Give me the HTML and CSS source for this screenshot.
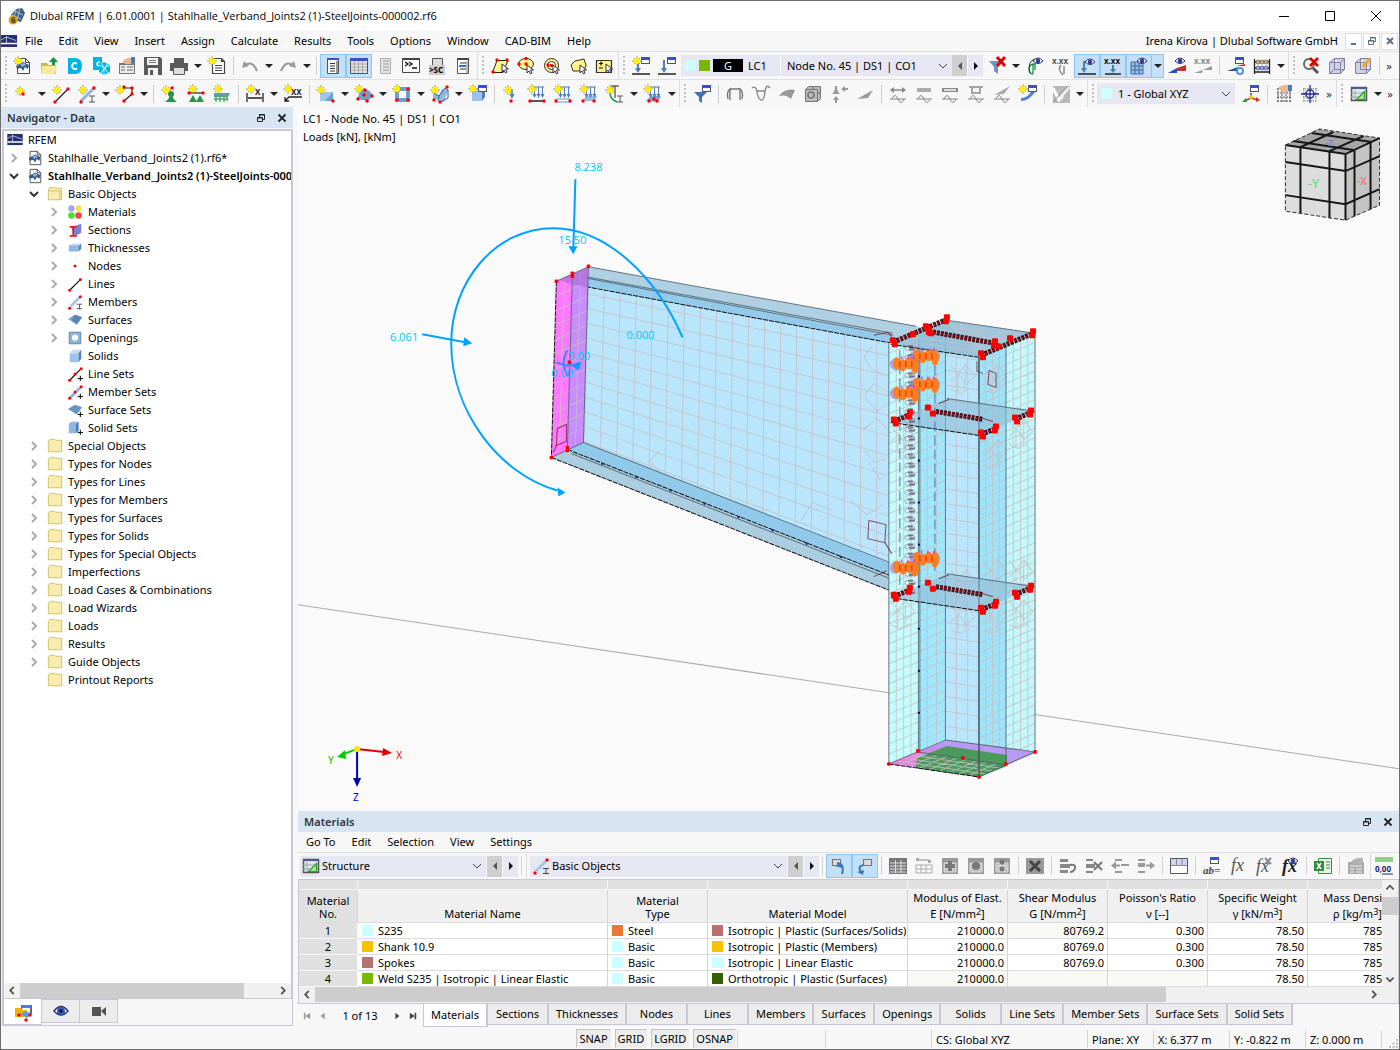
FILE: index.html
```html
<!DOCTYPE html>
<html lang="en">
<head>
<meta charset="utf-8">
<title>Dlubal RFEM</title>
<link rel="stylesheet" href="styles.css">
</head>
<body>
<div class="app">
  <header class="title">
    <svg class="icon" data-icon="app"></svg>
    <h1>Dlubal RFEM | 6.01.0001 | Stahlhalle_Verband_Joints2 (1)-SteelJoints-000002.rf6</h1>
    <div class="wincontrols">
      <button aria-label="Minimize"><svg viewBox="0 0 12 12"><path d="M1 6.500h10"/></svg></button>
      <button aria-label="Maximize"><svg viewBox="0 0 12 12"><path d="M1.500 1.500h9v9h-9z"/></svg></button>
      <button aria-label="Close"><svg viewBox="0 0 12 12"><path d="M1 1l10 10M11 1L1 11"/></svg></button>
    </div>
  </header>

  <nav class="menu" aria-label="Main menu">
    <svg class="logo" viewBox="0 0 16 12"><use href="#logo"/></svg>
    <button>File</button><button>Edit</button><button>View</button><button>Insert</button><button>Assign</button><button>Calculate</button><button>Results</button><button>Tools</button><button>Options</button><button>Window</button><button>CAD-BIM</button><button>Help</button>
    <span class="user">Irena Kirova | Dlubal Software GmbH</span>
    <button class="mdi" aria-label="Minimize document"><svg viewBox="0 0 10 10"><path d="M2 8h5"/></svg></button>
    <button class="mdi" aria-label="Restore document"><svg viewBox="0 0 10 10"><path class="thin" d="M1.500 4.500h5v4h-5zM3.500 4V1.500h5v4H7M1 5h6M3 2h6"/></svg></button>
    <button class="mdi" aria-label="Close document"><svg viewBox="0 0 10 10"><path d="M2 2l6 6M8 2L2 8"/></svg></button>
  </nav>

  <div class="bar">
    <div class="tools" data-tools="handle new open center connect props save print v report s undo v redo v s *navigator *tables panel console script list end"></div>
    <div class="tools" data-tools="handle selquad selell selcirc selpoly selnum end"></div>
    <div class="tools" data-tools="handle lcnew lcedit"></div>
    <div class="combo loadcase">
      <span class="swatch cyan"></span><span class="swatch green"></span><span class="tag">G</span><span class="lc">LC1</span>
      <select aria-label="Load case"><option>Node No. 45 | DS1 | CO1</option></select>
      <svg class="chev" viewBox="0 0 10 10"><path d="M1 3l4 4 4-4"/></svg>
    </div>
    <button class="step off" aria-label="Previous load case"><svg viewBox="0 0 6 8"><path d="M5 0v8L1 4z"/></svg></button><button class="step" aria-label="Next load case"><svg viewBox="0 0 6 8"><path d="M1 0v8l4-4z"/></svg></button>
    <div class="tools" data-tools="filterx v supeye supval *loadeye *loadval *mesheye *v reseye resval s resset abacus v end"></div>
    <div class="tools" data-tools="handle nozoom box boxedit s more"></div>
  </div>

  <div class="bar">
    <div class="tools" data-tools="handle node v line member v polyline v s nodesup linesup surfsup s dim v dimxx s surface v shell v opening v solid v block s nodeload memload lineload surfload imperf v loadgen v end"></div>
    <div class="tools" data-tools="handle filter s frame moment surfres dice supres wedge s res1 res2 res3 res4 res5 resnew s colors v end"></div>
    <div class="tools" data-tools="handle"></div>
    <div class="combo coords">
      <span class="swatch cyan"></span>
      <select aria-label="Coordinate system"><option>1 - Global XYZ</option></select>
      <svg class="chev" viewBox="0 0 10 10"><path d="M1 3l4 4 4-4"/></svg>
    </div>
    <div class="tools" data-tools="cs s grid snap more end"></div>
    <div class="tools" data-tools="handle table v more"></div>
  </div>

  <main class="work">
    <aside class="navigator">
      <div class="caption"><h2>Navigator - Data</h2>
        <button aria-label="Float navigator"><svg viewBox="0 0 10 10"><use href="#float"/></svg></button>
        <button aria-label="Close navigator"><svg viewBox="0 0 10 10"><use href="#close"/></svg></button></div>
      <div class="treebox">
        <ul class="tree" id="tree"></ul>
        <div class="hscroll"><button aria-label="Scroll left"><svg viewBox="0 0 10 10"><path d="M7 1L3 5l4 4"/></svg></button><div class="track"><i class="navthumb"></i></div><button aria-label="Scroll right"><svg viewBox="0 0 10 10"><path d="M3 1l4 4-4 4"/></svg></button></div>
      </div>
      <div class="navtabs">
        <button class="on" aria-label="Data"><svg class="icon" data-icon="navdata"></svg></button>
        <button aria-label="Display"><svg class="icon" data-icon="eye"></svg></button>
        <button aria-label="Views"><svg class="icon" data-icon="camera"></svg></button>
      </div>
    </aside>

    <section class="content">
      <div class="viewport">
        <svg class="scene" viewBox="298 107 1101 700" preserveAspectRatio="xMinYMin slice" role="img" aria-label="Steel joint model">
          <g class="caption-text"><text x="303" y="123">LC1 - Node No. 45 | DS1 | CO1</text><text x="303" y="141">Loads [kN], [kNm]</text></g>
          <path class="horizon" d="M298 604L1399 768"/>
          <g id="model"></g>
          <g class="loads">
            <path d="M682 337C655 275 605 228 553 228C495 228 451 281 451 343C451 412 500 474 557 490"/>
            <path d="M575 179L573 247M422 334L465 342"/>
            <path class="thin" d="M556 362q14 6 24 0M567 350q-8 14 1 26"/>
            <path class="head" d="M568 246h9l-4 8zM464 337l8 6-9 3zM557 487l8 5-7 4zM572 366l9-4-3 8z"/>
            <text x="574" y="171">8.238</text><text x="558" y="244">15.50</text><text x="390" y="341">6.061</text><text x="626" y="339">0.000</text><text x="568" y="360">0.00</text><text x="551" y="377">0.00</text>
          </g>
          <g class="axes">
            <path stroke="#e00000" d="M357 748L384 751"/><path fill="#e00000" d="M383 747l9 5-10 3z"/>
            <path stroke="#00d000" d="M357 748L344 753"/><path fill="#00d000" d="M345 749l-8 7 9 2z"/>
            <path stroke="#0000b0" d="M357 748V778"/><path fill="#0000b0" d="M353 777h8l-4 9z"/>
            <circle cx="357" cy="748" r="3" fill="#ffe600" stroke="none"/>
            <text x="396" y="758" fill="#f00000">X</text><text x="328" y="763" fill="#00c000">Y</text><text x="353" y="800" fill="#0000d0">Z</text>
          </g>
          <g class="cube">
            <path fill="#ddd" d="M1284 145l60 9v66l-60-9z"/><path fill="#c4c4c4" d="M1344 154l34-16v67l-34 15z"/><path fill="#a6a6a6" d="M1284 145l34-16 60 9-34 16z"/>
            <path class="edge" d="M1299 147v66M1328 151v67M1284 162l60 9 34-15M1284 195l60 9 34-15M1353 150v66M1369 142v67M1344 154v66M1284 145l60 9 34-16M1299 147l33-15M1328 151l34-15M1292 141l60 9M1310 133l60 9"/>
            <path class="rim" d="M1284 145l34-16 60 9v67l-34 15-60-9z"/>
            <text x="1306" y="188" fill="#6fe08a">-Y</text><text class="small" x="1355" y="185" fill="#f08080">-X</text><text class="tiny" x="1324" y="146" fill="#7f7fc8">-Z</text>
          </g>
        </svg>
      </div>

      <section class="materials">
        <div class="caption"><h2>Materials</h2>
          <button aria-label="Float table"><svg viewBox="0 0 10 10"><use href="#float"/></svg></button>
          <button aria-label="Close table"><svg viewBox="0 0 10 10"><use href="#close"/></svg></button></div>
        <nav class="menu sub" aria-label="Table menu"><button>Go To</button><button>Edit</button><button>Selection</button><button>View</button><button>Settings</button></nav>
        <div class="bar tablebar">
          <div class="combo structure"><svg class="icon" data-icon="table"></svg><select aria-label="Table group"><option>Structure</option></select><svg class="chev" viewBox="0 0 10 10"><path d="M1 3l4 4 4-4"/></svg></div>
          <button class="step off" aria-label="Previous group"><svg viewBox="0 0 6 8"><path d="M5 0v8L1 4z"/></svg></button><button class="step" aria-label="Next group"><svg viewBox="0 0 6 8"><path d="M1 0v8l4-4z"/></svg></button>
          <div class="tools" data-tools="s end"></div>
          <div class="combo objects"><svg class="icon" data-icon="tmember"></svg><select aria-label="Object group"><option>Basic Objects</option></select><svg class="chev" viewBox="0 0 10 10"><path d="M1 3l4 4 4-4"/></svg></div>
          <button class="step off" aria-label="Previous objects"><svg viewBox="0 0 6 8"><path d="M5 0v8L1 4z"/></svg></button><button class="step" aria-label="Next objects"><svg viewBox="0 0 6 8"><path d="M1 0v8l4-4z"/></svg></button>
          <div class="tools" data-tools="s *syncin *syncout s rows rowup rowadd rowcopy rowsplit s delete s ins cut left right s view s name fx fxx fxeye s excel s cards end"></div>
          <div class="tools" data-tools="decimals"></div>
        </div>
        <div class="gridbox">
          <div class="gridscroll">
            <table>
              <colgroup><col class="c-no"><col class="c-name"><col class="c-type"><col class="c-model"><col class="c-num"><col class="c-num"><col class="c-num"><col class="c-num"><col class="c-num"></colgroup>
              <thead>
                <tr class="strip"><td></td><td></td><td></td><td></td><td></td><td></td><td></td><td></td><td></td></tr>
                <tr><th>Material<br>No.</th><th>Material Name</th><th>Material<br>Type</th><th>Material Model</th><th class="unit">Modulus of Elast.<br>E [N/mm<sup>2</sup>]</th><th class="unit">Shear Modulus<br>G [N/mm<sup>2</sup>]</th><th class="unit">Poisson's Ratio<br>ν [--]</th><th class="unit">Specific Weight<br>γ [kN/m<sup>3</sup>]</th><th class="unit">Mass Density<br>ρ [kg/m<sup>3</sup>]</th></tr>
              </thead>
              <tbody>
                <tr><th>1</th><td><span class="swatch cyan"></span>S235</td><td><span class="swatch orange"></span>Steel</td><td><span class="swatch rose"></span>Isotropic | Plastic (Surfaces/Solids)</td><td class="n">210000.0</td><td class="n ro">80769.2</td><td class="n">0.300</td><td class="n">78.50</td><td class="n">7850.00</td></tr>
                <tr><th>2</th><td><span class="swatch amber"></span>Shank 10.9</td><td><span class="swatch cyan"></span>Basic</td><td><span class="swatch amber"></span>Isotropic | Plastic (Members)</td><td class="n">210000.0</td><td class="n">80769.0</td><td class="n">0.300</td><td class="n">78.50</td><td class="n">7850.00</td></tr>
                <tr><th>3</th><td><span class="swatch rose"></span>Spokes</td><td><span class="swatch cyan"></span>Basic</td><td><span class="swatch cyan"></span>Isotropic | Linear Elastic</td><td class="n">210000.0</td><td class="n">80769.0</td><td class="n">0.300</td><td class="n">78.50</td><td class="n">7850.00</td></tr>
                <tr><th>4</th><td><span class="swatch green"></span>Weld S235 | Isotropic | Linear Elastic</td><td><span class="swatch cyan"></span>Basic</td><td><span class="swatch forest"></span>Orthotropic | Plastic (Surfaces)</td><td class="n ro">210000.0</td><td class="n ro"></td><td class="n ro"></td><td class="n">78.50</td><td class="n">7850.00</td></tr>
              </tbody>
            </table>
          </div>
          <div class="vscroll"><button aria-label="Scroll up"><svg viewBox="0 0 10 10"><path d="M1 7l4-4 4 4"/></svg></button><div class="track"><i></i></div><button aria-label="Scroll down"><svg viewBox="0 0 10 10"><path d="M1 3l4 4 4-4"/></svg></button></div>
          <div class="hscroll"><button aria-label="Scroll left"><svg viewBox="0 0 10 10"><path d="M7 1L3 5l4 4"/></svg></button><div class="track"><i class="tablethumb"></i></div><button aria-label="Scroll right"><svg viewBox="0 0 10 10"><path d="M3 1l4 4-4 4"/></svg></button></div>
        </div>
        <div class="sheets">
          <div class="pager">
            <button aria-label="First table"><svg viewBox="0 0 10 10"><path fill="#999" d="M1 1h2v8H1zM9 1v8L3 5z"/></svg></button>
            <button aria-label="Previous table"><svg viewBox="0 0 10 10"><path fill="#999" d="M7 1v8L2 5z"/></svg></button>
            <span>1 of 13</span>
            <button aria-label="Next table"><svg viewBox="0 0 10 10"><path fill="#444" d="M3 1v8l5-4z"/></svg></button>
            <button aria-label="Last table"><svg viewBox="0 0 10 10"><path fill="#444" d="M7 1h2v8H7zM1 1v8l6-4z"/></svg></button>
          </div>
          <button class="on">Materials</button><button>Sections</button><button>Thicknesses</button><button>Nodes</button><button>Lines</button><button>Members</button><button>Surfaces</button><button>Openings</button><button>Solids</button><button>Line Sets</button><button>Member Sets</button><button>Surface Sets</button><button>Solid Sets</button>
        </div>
      </section>
    </section>
  </main>

  <footer class="status">
    <div class="snaps"><button>SNAP</button><button>GRID</button><button>LGRID</button><button>OSNAP</button></div>
    <span class="w-a"></span><span class="w-b"></span><span class="w-c">CS: Global XYZ</span><span class="w-d">Plane: XY</span><span class="w-e">X: 6.377 m</span><span class="w-e">Y: -0.822 m</span><span class="w-e">Z: 0.000 m</span><span class="w-f"></span>
    <svg class="grip" viewBox="0 0 10 10"><path d="M8 1h2v2H8zM8 4.500h2v2H8zM8 8h2v2H8zM4.500 4.500h2v2h-2zM4.500 8h2v2h-2zM1 8h2v2H1z"/></svg>
  </footer>
</div>

<svg class="defs" aria-hidden="true">
  <symbol id="logo" viewBox="0 0 16 12"><path fill="#27306f" d="M0 0h16v12H0z"/><path d="M0 8.500h16" stroke="#fff" stroke-width="1.500"/><path d="M5.500 1v7M0 5l5.500-3L15 5.500" fill="none" stroke="#cfd4f0" stroke-width=".8"/></symbol>
  <symbol id="float" viewBox="0 0 10 10"><path d="M1.500 4.500h5v4h-5zM3.500 4V1.500h5v5H7M1 5h6M3 2h6" fill="none" stroke="#222"/></symbol>
  <symbol id="close" viewBox="0 0 10 10"><path d="M1.500 1.500l7 7M8.500 1.500l-7 7" fill="none" stroke="#222" stroke-width="1.800"/></symbol>
</svg>
<script src="script.js"></script>
</body>
</html>
```
FILE: styles.css
```css
* { box-sizing: border-box; }
html, body { margin: 0; height: 100%; }
body, button, select { font: 11px/16px "Noto Sans", "Open Sans", sans-serif; color: #000; }
button { border: 0; padding: 0; background: none; }
ul { list-style: none; margin: 0; padding: 0; }
h1, h2 { margin: 0; line-height: 20px; }
svg { display: block; flex: none; }
.defs { display: none; }

.app { height: 100vh; min-height: 700px; display: flex; flex-direction: column; background: #f7f7f7; border: 1px solid #6e6e6e; overflow: hidden; }
.icon { width: 18px; height: 18px; overflow: visible; }
.icon .serif { font-family: "Liberation Serif", serif; }

.title { height: 30px; flex: none; display: flex; align-items: center; gap: 4px; padding-left: 7px; background: #fff; }
.title h1 { flex: 1; font: 11px/20px "Open Sans", sans-serif; }
.wincontrols { display: flex; }
.wincontrols button { width: 46px; height: 30px; display: grid; place-items: center; }
.wincontrols svg { width: 12px; height: 12px; fill: none; stroke: #000; }

.menu { height: 20px; flex: none; display: flex; align-items: center; }
.menu .logo { width: 16px; height: 12px; }
.menu button { padding: 0 8px; }
.user { margin-left: auto; margin-right: 7px; }
.menu .mdi { width: 17px; height: 17px; margin-right: 1px; padding: 0; border: 1px solid #dedede; background: #fff; display: grid; place-items: center; }
.mdi svg { width: 10px; height: 10px; fill: none; stroke: #5d6f82; stroke-width: 2; }
.mdi .thin { stroke-width: 1; }

.bar { height: 28px; flex: none; display: flex; align-items: center; border-top: 1px solid #e0e0e0; }
.tools { display: flex; align-items: center; flex: none; }
.tool { width: 26px; height: 24px; display: grid; place-items: center; border: 1px solid transparent; }
.tool.on, .drop.on { background: #c4e0f7; border: 1px solid #8ec6f2; }
.drop { width: 12px; height: 24px; display: grid; place-items: center; border: 1px solid transparent; }
.drop.on { border-left: 0; }
.drop svg { width: 8px; height: 4px; }
.handle { width: 9px; height: 19px; padding-left: 4px; }
.handle::before { content: ""; display: block; width: 2px; height: 19px; background: repeating-linear-gradient(#c0c0c0 0 2px, transparent 2px 4px); }
.sep { width: 7px; height: 18px; border-right: 1px solid #d0d0d0; margin: 0 3px 0 -3px; }
.end { width: 2px; height: 27px; border-right: 1px solid #dcdcdc; }
.more { width: 12px; text-align: center; color: #333; }

.combo { height: 21px; display: flex; align-items: center; flex: none; background: #e7e7f3; padding: 0 4px; }
.combo select { flex: 1; min-width: 0; appearance: none; border: 0; background: none; padding: 0; height: 20px; outline: 0; }
.chev { width: 10px; height: 10px; fill: none; stroke: #444; }
.swatch { width: 11px; height: 11px; flex: none; display: inline-block; vertical-align: top; }
.cyan { background: #cff; }
.green { background: #7ab800; }
.orange { background: #e87833; }
.rose { background: #b97070; }
.amber { background: #f7c300; }
.forest { background: #365f00; }
.loadcase { width: 271px; gap: 3px; margin-left: 1px; }
.tag { width: 30px; background: #000; color: #fff; line-height: 13px; text-align: center; }
.lc { width: 33px; margin-left: 2px; border-right: 1px solid #fff; }
.loadcase select { margin-left: 3px; }
.coords { width: 138px; gap: 6px; margin-right: 3px; }
.step { width: 15px; height: 21px; flex: none; margin-right: 1px; background: #e7e7f3; display: grid; place-items: center; }
.step svg { width: 6px; height: 8px; fill: #111; }
.step.off { background: #cfcfcf; }
.step.off svg { fill: #555; }

.work { flex: 1; min-height: 0; display: flex; }
.navigator { width: 292px; flex: none; display: flex; flex-direction: column; margin-bottom: 2px; }
.caption { height: 21px; flex: none; display: flex; align-items: center; gap: 11px; padding: 0 6px; background: #d7e4f2; }
.caption h2 { flex: 1; font-size: 11px; font-weight: 600; color: #2c3440; }
.caption svg { width: 10px; height: 10px; }
.treebox { flex: 1; min-height: 0; display: flex; flex-direction: column; margin: 1px 0 0 1px; border: 2px solid #c9c6d6; border-bottom-width: 1px; background: #fff; }
.tree { flex: 1; min-height: 0; overflow: hidden; }
.tree li { height: 18px; display: flex; align-items: center; white-space: nowrap; padding-left: 3px; }
.tree .icon { width: 20px; height: 16px; margin-right: 3px; }
.tree .twist { width: 14px; height: 10px; margin-right: 4px; }
.tree .twist svg { width: 14px; height: 10px; fill: none; stroke: #aaa; stroke-width: 2; }
.tree .twist.open svg { stroke: #333; }
.tree .l0 { padding-left: 1px; }
.tree .l2 { padding-left: 23px; }
.tree .l3 { padding-left: 43px; }
.tree .current { font-weight: 600; }

.hscroll { height: 15px; flex: none; display: flex; background: #f0f0f0; }
.hscroll button, .vscroll button { width: 16px; height: 15px; display: grid; place-items: center; }
.hscroll svg, .vscroll svg { width: 10px; height: 9px; fill: none; stroke: #555; stroke-width: 2; }
.track { flex: 1; display: flex; }
.track i { background: #cdcdcd; }
.navthumb { width: 88%; }
.tablethumb { width: 81%; }

.navtabs { height: 27px; flex: none; display: flex; align-items: flex-start; margin-left: 1px; border: 1px solid #c9c6d6; border-left-width: 2px; border-top: 0; }
.navtabs button { width: 38px; height: 24px; display: grid; place-items: center; background: #ececec; border: 1px solid #c9c6d6; border-left: 0; }
.navtabs .on { height: 26px; background: #fff; border-top: 0; }

.content { flex: 1; min-width: 0; display: flex; flex-direction: column; margin-left: 5px; }
.viewport { flex: 1; min-height: 0; background: #fafafa; margin-bottom: 3px; overflow: hidden; }
.scene { width: 100%; height: 100%; }
.scene text { font-size: 11px; }
.horizon { stroke: #aaa; fill: none; }
.loads path { fill: none; stroke: #00a2ff; stroke-width: 2; }
.loads .thin { stroke: #3a86ff; }
.loads .head { fill: #00a2ff; stroke: none; }
.loads text { fill: #00c8f5; font-family: "Open Sans", sans-serif; }
.axes path { stroke-width: 2; }
.axes text { font-size: 10px; }
.cube .edge { fill: none; stroke: #161616; stroke-width: 2; }
.cube .rim { fill: none; stroke: #333; stroke-dasharray: 4 2; }
.cube text { font-weight: 600; font-size: 13px; }
.cube .small { font-size: 11px; }
.cube .tiny { font-size: 9px; }
.mesh { fill: none; stroke: #c6bfc2; stroke-opacity: .8; }
.thinline { fill: none; stroke: #4a5a64; stroke-opacity: .8; }
.black { fill: none; stroke: #111; stroke-dasharray: 5 1; }
.weld { stroke: #4a0a12; stroke-width: 5; stroke-dasharray: 3 1; fill: none; }
.weldcore { stroke: #c02030; stroke-width: 1; stroke-dasharray: 2 2; fill: none; }
.pink { fill: none; stroke: #7c2035; stroke-opacity: .8; }

.materials { flex: none; }
.materials .tablebar { height: 27px; }
.structure { width: 186px; margin-left: 2px; gap: 2px; padding-left: 2px; }
.materials .step { margin-left: 1px; margin-right: 0; }
.objects { width: 257px; margin-left: 3px; gap: 2px; padding-left: 2px; }
.gridbox { display: grid; grid-template-columns: minmax(0, 1fr) 16px; grid-template-rows: 107px 16px; border: 1px solid #c9c6d6; background: #f0f0f0; }
.gridscroll { overflow: hidden; }
table { width: 1109px; table-layout: fixed; border-collapse: separate; border-spacing: 0; }
.c-no { width: 59px; } .c-name { width: 250px; } .c-type { width: 100px; } .c-model { width: 200px; } .c-num { width: 100px; }
th, td { border-right: 1px solid #d4d4d4; border-bottom: 1px solid #dcdcdc; font-weight: 400; overflow: hidden; white-space: nowrap; }
.strip td { height: 10px; background: #e0e0e0; border-color: #f4f4f4; padding: 0; }
thead th { height: 32px; padding: 0 0 2px; background: #f0f0f0; line-height: 13px; vertical-align: bottom; }
thead th.unit { line-height: 16px; padding: 0; }
thead th:first-child, tbody th { background: #e0e0e0; }
tbody th { border-color: #f7f7f7; padding: 0; line-height: 15px; }
tbody td { height: 16px; padding: 0 4px; background: #fff; line-height: 15px; }
tbody td .swatch { margin: 2px 5px 0 0; }
tbody td.n { text-align: right; padding: 0 3px; }
tbody td.ro { background: #f8f9f4; }
sup { font-size: 9px; line-height: 9px; vertical-align: 3px; }
.vscroll { display: flex; flex-direction: column; }
.vscroll .track { align-items: flex-start; }
.vscroll .track i { width: 16px; height: 18px; margin-top: 2px; }
.gridbox .hscroll { grid-column: 1 / -1; padding-right: 16px; }

.sheets { height: 24px; display: flex; align-items: flex-start; }
.pager { width: 125px; display: flex; align-items: center; gap: 6px; padding: 3px 5px 0 4px; line-height: 18px; }
.pager svg { width: 10px; height: 8px; }
.pager span { flex: 1; text-align: center; }
.sheets > button { min-width: 61px; height: 21px; padding: 0 7px; background: #ececec; border: 1px solid #c9c6d6; border-width: 0 2px 1px 0; }
.sheets > button.on { height: 23px; background: #fff; border-left-width: 1px; }

.status { height: 21px; flex: none; display: flex; align-items: center; }
.snaps { display: flex; gap: 4px; margin-left: auto; }
.snaps button { height: 19px; padding: 0 2px; background: #ececec; border: 1px solid #c4c4c4; border-right-color: #eee; border-bottom-color: #eee; }
.status span { height: 18px; border-left: 1px solid #d5d5d5; padding-left: 4px; line-height: 19px; }
.w-a { width: 88px; margin-left: 1px; } .w-b { width: 106px; } .w-c { width: 156px; } .w-d { width: 66px; } .w-e { width: 76px; } .w-f { width: 7px; }
.grip { width: 10px; height: 10px; align-self: flex-end; margin: 0 1px 1px 0; fill: #bbb; }
```
FILE: script.js
```js
// ---- icon building blocks, on an 18 x 18 canvas ----
const p = (d, stroke, width = 1, fill = "none") => `<path d="${d}" fill="${fill}" stroke="${stroke}" stroke-width="${width}"/>`;
const f = (d, fill) => `<path d="${d}" fill="${fill}"/>`;
const star = (x = 5, y = 5) => p(`M${x} ${y - 5}v10M${x - 5} ${y}h10M${x - 3} ${y - 3}l6 6M${x + 3} ${y - 3}l-6 6`, "#a8a444", 1) + `<circle cx="${x}" cy="${y}" r="3" fill="#ffee00"/>`;
const dots = (...xy) => xy.map(([x, y]) => `<circle cx="${x}" cy="${y}" r="1.700" fill="#f00"/>`).join("");
const win = (x = 9, y = 0, c = "#3c4fc8") => `<rect x="${x + .5}" y="${y + .5}" width="8" height="6" fill="#fff" stroke="#555"/><path d="M${x} ${y}h9v3h-9z" fill="${c}"/>`;
const eye = (x, y) => `<path d="M${x - 5} ${y}q5-6 10 0q-5 5-10 0z" fill="#fff" stroke="#2b2a5c"/><circle cx="${x}" cy="${y}" r="2.300" fill="#2f3e9e"/>`;
const cursor = (x, y) => `<path d="M${x} ${y}v8l2-2 1.500 3 1.500-1-1.500-3h3z" fill="#fff" stroke="#333"/>`;
const loads = p("M5.500 2H16M6.500 2v9M10.500 2v9M14.500 2v9", "#4d7fb5") + f("M4.500 9h4l-2 4zM8.500 9h4l-2 4zM12.500 9h4l-2 4z", "#4d7fb5");
const lbl = (t, x = 1, y = 7, c = "#222", s = 8) => `<text x="${x}" y="${y}" font-size="${s}" font-weight="700" fill="${c}">${t}</text>`;
const gridlines = (c = "#888") => p("M2 4h14M2 8h14M2 12h14M2 16h14M3 3v14M7 3v14M11 3v14M15 3v14", c, 1);
const sheet = f("M1 1h16v16H1z", "#999") + f("M3 6h12v9H3z", "#bbb") + p("M3 6h12v9H3zM3 9h12M3 12h12M7 6v9M11 6v9", "#ddd");
const wave = p("M1 14h16M3 14q3-7 6 0t6 0", "#888");
const steelFile = p("M3.500 1.500h8l4 4v11h-12zM11.500 1.500v4h4", "#444", 1, "#fff") + f("M2 9l7-4 6 3-1 4-3-2-2 4-2-3-4 1z", "#365a8c") + f("M6 7l4-1 2 2-4 2z", "#8fb0d8");
const cubeIcon = f("M3 6l4-4h9l-3 4z", "#c8dcf5") + f("M3 6h10v10H3z", "#9cc2f0") + f("M13 6l3-4v10l-3 4z", "#567fb5");
const folder = (open) => p("M1.500 3.500l2-2h5l1 1h7v13h-15z", "#c9bb62", 1, "#f7edae") + (open ? p("M1.500 5.500h13v10", "#c9bb62") : "");

const ICONS = {
  app: f("M3 8l5-6 6-1 3 5-4 9-7-2z", "#3f5f80") + p("M4 8l9 4M7 4l8 4M8 2l-2 9M12 1l-3 12", "#a9c6e0") + `<circle cx="5" cy="13" r="4.500" fill="#d9a520"/>` + lbl("6", 3, 16, "#3c2f00", 8),
  new: steelFile + star(4, 4),
  open: f("M1 6h6l1 2h8v9H1z", "#c8b84e") + f("M2 9h15l-2 8H1z", "#f5ea9c") + f("M12 8V5h-3l4.500-5L18 5h-3v3z", "#17924a"),
  center: f("M2 1h8q6 1 6 8t-6 8H2z", "#00b4e6") + p("M11 6.500q-4-2-5 2.500 1 4.500 5 2.500", "#fff", 2),
  connect: f("M1 0h9v13H1z", "#00b4e6") + p("M8 5q-3 0-3 2t3 2", "#fff", 1.5) + f("M12 5l6 3v7l-6 3-5-3V8z", "#00b4e6") + p("M7 8l5 3 6-3M12 11v7M9 6l7 10M16 6l-7 10", "#fff", .8),
  props: f("M1 6h16v11H1z", "#777") + f("M2 8h14v8H2z", "#eee") + p("M3 10h4M3 13h4M9 10h6M9 13h6", "#666") + f("M4 5q4-5 12-4v4q-4 3-8 2z", "#e8b890") + f("M13 0h4v6h-4z", "#4a7ab8"),
  save: f("M0 0h16l2 2v16H0z", "#5a5a5a") + f("M3 1h11v7H3z", "#f4f4f4") + f("M4 11h10v7H4z", "#f4f4f4") + p("M5 3.500h7M5 5.500h7", "#777") + f("M6 13h3v5H6z", "#5a5a5a"),
  print: f("M4 1h10v5H4zM0 6h18v8H0z", "#5a5a5a") + f("M4 11h10v6H4z", "#ddd") + p("M3.500 10.500h11v7h-11z", "#5a5a5a"),
  report: p("M4.500 1.500h9l3 3v12h-12zM13.500 1.500v3h3M7 8.500h7M7 11h7M7 13.500h7", "#444", 1.2, "#fff") + star(4, 4),
  undo: p("M3 9q8-7 13 5", "#999", 2) + f("M1 11l2-7 5 5z", "#999"),
  redo: p("M15 9q-8-7-13 5", "#999", 2) + f("M17 11l-2-7-5 5z", "#999"),
  navigator: p("M3.500 1.500h11v15h-11z", "#555", 1, "#fff") + f("M3 1h12v2H3z", "#3c4fc8") + p("M6 6.500h5M6 9h5M6 11.500h5M6 14h5", "#333") + f("M12 4h2v12h-2z", "#999"),
  tables: p("M.500 1.500h17v15H.500z", "#555", 1, "#e4e4e4") + f("M0 1h18v3H0z", "#3c4fc8") + p("M1 7h16M1 10h16M1 13h16M4.500 4v12M8.500 4v12M12.500 4v12", "#aaa"),
  panel: p("M4.500 1.500h10v15h-10z", "#aaa", 1, "#e4e4e4") + p("M7 4h6M7 7h6M7 10h6M7 13h6", "#999"),
  console: p("M.500 1.500h17v14H.500z", "#444", 1, "#fff") + f("M0 1h18v2H0z", "#444") + p("M3 5l3 2-3 2M7 5l3 2-3 2M10 11h5", "#111", 1.4),
  script: p("M4.500 1.500h10v7h-10z", "#555", 1, "#ddd") + f("M1 8h16v10H1z", "#ccc") + lbl("&gt;SC", 1, 16, "#000", 8),
  list: p("M3.500 1.500h11v15h-11z", "#555", 1, "#fff") + f("M3 1h12v2H3z", "#444") + p("M6 6h6M6 12h6", "#333") + p("M5 9h8", "#3c6fd0", 2) + f("M12 4h2v12h-2z", "#bbb"),
  selquad: p("M6 3.500h11L12 15.500H1.500z", "#222", 1, "#fff38a") + dots([6, 3], [16, 3], [2, 15]) + cursor(11, 7),
  selell: `<ellipse cx="9" cy="7" rx="7.500" ry="5.500" fill="#fff38a" stroke="#333"/>` + dots([9, 1.5], [2, 7], [9, 7]) + cursor(10, 8),
  selcirc: `<circle cx="8.500" cy="8.500" r="7" fill="#fff38a" stroke="#333"/><circle cx="8.500" cy="8.500" r="4" fill="#fff" stroke="#333"/>` + dots([8.5, 8.5], [5, 8]) + cursor(10, 8),
  selpoly: p("M2 8l4-4 9-2 2 6-2 6H4z", "#333", 1, "#fff38a") + cursor(11, 8),
  selnum: p("M1.500 3.500h15v12h-15z", "#333", 1.2, "#fff38a") + p("M4 6.500h4M6 4.500v4M4 11h4", "#111", 1.2) + cursor(11, 7),
  lcnew: p("M0 17h18", "#222", 1.5) + p("M6 3v9", "#4d7fb5", 2) + f("M3 11h6l-3 5z", "#4d7fb5") + win() + star(5, 4),
  lcedit: p("M0 17h18", "#222", 1.5) + p("M6 3v9", "#4d7fb5", 2) + f("M3 11h6l-3 5z", "#4d7fb5") + win(),
  filterx: f("M1 4h14l-5 6v7l-4-3v-4z", "#6f93c4") + p("M9 0l8 9M17 0L9 9", "#e00000", 3),
  supeye: p("M9 6v7M9 7q-6 0-6 5t4 5M7 7v10", "#17924a", 1.3) + p("M9 2q-8 2-5 14", "#333") + eye(12, 4),
  supval: lbl("x.xx", 0, 7, "#555") + p("M9 8q-4 4 2 10M12 9v8", "#777", 1.3),
  loadeye: p("M0 17h18", "#222", 1.5) + p("M6 4v8", "#4d7fb5", 2) + f("M3 11h6l-3 5z", "#4d7fb5") + eye(12, 5),
  loadval: lbl("x.xx", 0, 7, "#111") + p("M1 17h16", "#222", 1.5) + p("M9 8v5", "#4d7fb5", 2) + f("M6 12h6l-3 4z", "#4d7fb5"),
  mesheye: f("M1 5h12v12H1z", "#9dbde4") + p("M1 5h12v12H1zM1 9h12M1 13h12M5 5v12M9 5v12", "#3f6aa5") + eye(12, 4),
  reseye: f("M0 16h9v-5z", "#2050c0") + f("M18 8L9 11v3h9z", "#d03020") + eye(12, 4),
  resval: lbl("x.xx", 0, 7, "#888") + f("M0 16h8l1-3 9-4v4H9z", "#999"),
  resset: win(8, 0) + f("M0 14h10l1-4z", "#2050c0") + f("M9 9h9V7z", "#d03020") + `<circle cx="13" cy="14" r="3" fill="#fff" stroke="#5d8ed8" stroke-width="2"/>`,
  abacus: p("M1.500 2v15M16.500 2v15M1 5h16M1 11h16M1 15h16", "#222", 1.3) + `<g fill="#ccbb77" stroke="#444" stroke-width=".6"><circle cx="5" cy="5" r="2"/><circle cx="9" cy="5" r="2"/><circle cx="13" cy="5" r="2"/></g><g fill="#88aaff" stroke="#444" stroke-width=".6"><circle cx="5" cy="11" r="2"/><circle cx="9" cy="11" r="2"/><circle cx="13" cy="11" r="2"/></g>`,
  nozoom: `<circle cx="7" cy="7" r="5" fill="none" stroke="#666" stroke-width="2"/>` + p("M11 11l5 5", "#555", 3) + p("M8 1l8 8M16 1L8 9", "#e00000", 2.6),
  box: p("M1.500 5.500l5-4h10v11l-4 4h-11zM1.500 5.500h11v11M12.500 5.500l4-4M6.500 1.500v11h10M6.500 12.500l-5 4", "#8080a0", 1, "#d0d0e6"),
  boxedit: p("M1.500 5.500l5-4h10v11l-4 4h-11zM1.500 5.500h11v11M12.500 5.500l4-4M6.500 1.500v11h10", "#8080a0", 1, "#d0d0e6") + p("M9 10l7-8", "#f0a830", 3),
  node: star(6, 6) + dots([9, 9]),
  line: p("M4 16L16 4", "#222", 1.2) + dots([3, 17], [16, 4]) + star(5, 5),
  member: p("M3 16L16 3", "#8fb4e4", 3) + dots([3, 17], [16, 3]) + p("M11 11h6M14 11v6M11 17h6", "#555") + star(5, 5),
  polyline: p("M6 3h10v6L8 16", "#222", 1.2) + dots([8, 2], [16, 3], [16, 9], [8, 16]) + star(4, 5),
  nodesup: f("M4 17q5-3 5-9h2q0 6 5 9z", "#2b9448") + `<circle cx="10" cy="9" r="3" fill="#2b9448"/>` + dots([11, 3]) + star(5, 5),
  linesup: p("M2 8h14", "#333", 1.3) + dots([2, 8], [16, 8]) + f("M2 17l4-7 4 7zM9 17l4-7 4 7z", "#2b9448") + star(6, 4),
  surfsup: f("M1 8h16l-2 4H1z", "#5d9ba5") + p("M3 11v6M7 11v6M11 11v6M14 11v5M1 14h14", "#4aa868", 1.4) + star(5, 4),
  dim: p("M1 8v9M17 8v9M2 13h14", "#222", 1.3) + lbl("X", 9, 10, "#222", 8) + star(5, 4),
  dimxx: p("M1 16l4-4h13M1 12v4h4", "#222", 1.3) + lbl("XX", 7, 10, "#222", 8) + star(4, 4),
  surface: f("M3 7h13v9H3z", "#6d9fcc") + f("M3 7h13l-8 9H3z", "#a3c7e8") + dots([16, 16]) + star(4, 5),
  shell: f("M2 14L6 5q8-3 12 6l-5 5z", "#6d9fcc") + dots([3, 14], [10, 5], [17, 11], [12, 16], [9, 10]) + star(4, 4),
  opening: p("M4 4h11v11H4z", "#6d9fcc", 4, "#fff") + dots([4, 4], [15, 4], [4, 15], [15, 15]) + star(4, 4),
  solid: f("M2 8l6 3 3-7 6 1-4 12-6-3-5 0z", "#8db8e0") + p("M3 8l5 3-1 5M8 11l6-8 3 2v8l-7 4", "#2f5f98") + dots([16, 2], [3, 15], [9, 17]) + star(4, 5),
  block: cubeIcon + win() + star(4, 4),
  nodeload: p("M10 4v7", "#4d7fb5", 1.5) + f("M7.500 9h5L10 14z", "#4d7fb5") + dots([9, 16]) + star(6, 5),
  memload: loads + p("M2 16h14", "#222", 1.5) + dots([2, 16], [16, 16]) + star(4, 4),
  lineload: loads + p("M2 14h14v3H2z", "#6f97c8") + dots([2, 16], [16, 16]) + star(4, 4),
  surfload: f("M2 16l4-5h11l-2 5z", "#9bbfe4") + loads + dots([3, 16], [14, 16]) + star(4, 4),
  imperf: p("M7 2q-7 10 4 15", "#17924a", 1.5) + p("M9 1v12M5 1h8", "#222", 1, "none") + p("M11 11h6M14 11v6M11 17h6", "#555") + star(4, 5),
  loadgen: f("M2 16l5-5h10l-3 6z", "#7ca7d8") + loads + dots([5, 16], [10, 14], [13, 16]) + star(4, 4),
  filter: f("M1 7h13l-5 5v6l-3-2v-4z", "#4472b5") + win(),
  frame: p("M4 4h10v11M4 4v11M5 3q-5 3-3 11M13 3q5 3 3 11", "#777", 1.4),
  moment: p("M0 3q4-3 5 4t4 8 4-8 5-4M5 6h8", "#888", 1.4),
  surfres: f("M1 11q6-8 16-6l-4 9q-5-5-12-3z", "#999"),
  dice: p("M1.500 4.500l3-3h12v12l-3 3h-12zM1.500 4.500h12v12", "#777", 1, "#bbb") + `<circle cx="7" cy="10" r="3" fill="none" stroke="#777" stroke-width="1.500"/><circle cx="9" cy="3" r="1" fill="#777"/><circle cx="15" cy="8" r="1" fill="#777"/>`,
  supres: f("M2 9q3-2 3-8h2q0 6 3 8zM5 18v-3H3l3-4 3 4H7v3zM18 5h-3v2l-4-3 4-3v2h3z", "#999"),
  wedge: f("M1 14L17 5l-5 8z", "#999"),
  res1: p("M2 5h14", "#888", 1.5) + f("M1 5l4-3v6zM17 5l-4-3v6z", "#888") + wave, res2: p("M2 5h14", "#aaa", 4) + wave, res3: p("M1 5h16", "#888", 4) + p("M3 5h12", "#ddd", 2) + wave,
  res4: p("M2 2h14M4 8h10M5 3v4M13 3v4", "#888", 1.5) + wave, res5: f("M1 10L17 1l-6 8z", "#aaa") + wave,
  resnew: f("M2 16q8 0 15-10l-5 1q-4 6-10 6z", "#5580d8") + win() + star(4, 4),
  colors: f("M1 1h17v17H1z", "#b8b8b8") + p("M1 3l6 12 4-4", "#fff", 3) + p("M8 13l9-11", "#eee", 3) + p("M1 17L16 1", "#888"),
  cs: p("M9 13V8", "#1a3fd0", 1.5) + p("M9 13L2 16M9 13l7 2", "#d03020", 1.5) + f("M0 17l4-4 1 4z", "#18a040") + f("M18 15l-4-3v5z", "#d03020") + `<circle cx="9" cy="12" r="2" fill="#f0d000"/>` + win(8, 0),
  grid: `<g stroke-dasharray="2 1">` + gridlines("#555") + "</g>" + f("M3 3q4-4 12-3v6q-5 3-8 1z", "#e8b890") + f("M13 0h4v6h-4z", "#4a7ab8"),
  snap: `<g stroke-dasharray="1 1">` + gridlines("#777") + `</g><circle cx="9" cy="9" r="4" fill="#fff" stroke="#1f2b9e" stroke-width="1.500"/>` + p("M9 0v18M0 9h18", "#1f2b9e", 1.3),
  table: p("M1.500 2.500h15v13h-15z", "#555", 1.5, "#dfe9df") + f("M1 2h16v2H1z", "#4858a0") + p("M5 5v10M1 8h15M1 12h15", "#9ab") + p("M6.500 14.500h8v-8z", "#2fa030", 1.2, "#a5e59a"),
  syncin: p("M2.500 2.500h8v6h-8z", "#777", 1.2, "#ddd") + p("M7 6q8 1 5 11", "#3b78b8", 2) + f("M5 9l6-4 1 6z", "#3b78b8"),
  syncout: p("M7.500 2.500h8v6h-8z", "#777", 1.2, "#ddd") + p("M8 8q-7 1-3 7", "#3b78b8", 2) + f("M1 15l7-2-1 5z", "#3b78b8"),
  rows: f("M0 1h18v16H0z", "#777") + p("M1 6h16M1 9h16M1 12h16M1 15h16M6.500 3v13M12 3v13", "#ddd"),
  rowup: p("M1 8h16v8H1zM1 12h16M6 8v8M11 8v8", "#aaa") + p("M2 3h12", "#aaa", 1.4) + f("M1 1h3v3H1zM13 3h3v3h-3z", "#aaa"),
  rowadd: sheet + p("M9 4v10M4 9h10", "#777", 4), rowcopy: sheet + `<circle cx="9" cy="9" r="4" fill="#777"/>`, rowsplit: sheet + `<circle cx="9" cy="5" r="2.500" fill="#777"/><circle cx="9" cy="12" r="2.500" fill="#777"/>`,
  delete: f("M0 1h18v16H0z", "#999") + p("M4 4l10 10M14 4L4 14", "#444", 3),
  ins: f("M1 2h8v3H1zM1 7h10v4H1zM1 13h8v3H1z", "#888") + p("M11 8q6-1 5 3t-5 4", "#777", 2),
  cut: f("M1 2h7v2H1zM1 7h9v4H1zM1 14h7v2H1z", "#888") + p("M9 5l8 8M17 5l-8 8", "#777", 2),
  left: f("M4 2h7v2H4zM10 7h8v2h-8zM4 14h7v2H4zM0 8.500l5-4v3h4v2H5v3z", "#999"), right: f("M1 2h7v2H1zM1 6h7v4H1zM1 14h7v2H1zM18 8.500l-5-4v3H9v2h4v3z", "#999"),
  view: p("M.500 1.500h17v15H.500z", "#555", 1, "#fff") + f("M1 2h16v6H1z", "#cfd2f2") + p("M1 8.500h16M6.500 2v6M12 2v6", "#889"),
  name: `<text class="serif" x="0" y="17" font-size="11" font-style="italic" font-weight="700" fill="#444">ab=</text>` + win(7, 0),
  fx: `<text class="serif" x="2" y="14" font-size="18" font-style="italic" fill="#555">fx</text>`,
  fxx: `<text class="serif" x="1" y="15" font-size="18" font-style="italic" fill="#555">fx</text>` + p("M10 1l6 6M16 1l-6 6", "#888", 2),
  fxeye: `<text class="serif" x="1" y="15" font-size="18" font-style="italic" font-weight="700" fill="#222">fx</text>` + eye(12, 4),
  excel: p("M4.500 1.500h13v15h-13z", "#2f8f3f", 1, "#eaf5ea") + f("M0 4h10v10H0z", "#2f8f3f") + p("M3 6l4 6M7 6l-4 6", "#fff", 1.4) + p("M12 5h4M12 8h4M12 11h4", "#2f8f3f"),
  cards: f("M1 5h16v12H1z", "#aaa") + p("M3 9h12M3 12h4M9 12h6M3 15h4M9 15h6", "#eee") + f("M4 5q4-5 12-4v4q-4 3-8 2z", "#b4b4b4"),
  decimals: f("M0 0h18v5H0z", "#86d67c") + lbl("0,00", 0, 15, "#1c2470", 8) + p("M7 17h11", "#1c2470"),
  navdata: f("M7 2h11v9H7z", "#666") + f("M8 2h9v3H8z", "#4d7ee0") + f("M8 5h8v5H8z", "#fff") + f("M1 5h6l1 2h5v7H1z", "#f2b200") + f("M6 11l6-3 6 3-5 4z", "#5e9fd0") + dots([12, 17], [16, 12], [5, 12]),
  eye: p("M2 9q7-9 14 0-7 8-14 0z", "#2b2a5c", 1.4, "#fff") + `<circle cx="9" cy="9" r="4" fill="#3157b8"/><circle cx="9" cy="9" r="1.500" fill="#000"/>`,
  camera: f("M2 5h9v9H2zM11 9l5-4v9z", "#555"),
  rfem: `<use href="#logo" x="0" y="2" width="18" height="13"/>`, file: steelFile, folder: folder(false), folderopen: folder(true),
  materials: `<circle cx="5" cy="5" r="3.500" fill="#a3a3f0"/><circle cx="13" cy="5" r="3.500" fill="#efe34c"/><circle cx="5" cy="13" r="3.700" fill="#4be02c"/><circle cx="13" cy="13" r="3.700" fill="#f04848"/>`,
  sections: f("M5 6l11-4v10l-7 4z", "#7880dc") + p("M3 5.500h8M7 6v9M3 15.500h8", "#e02020", 2), thick: f("M2 6l5-2h9l-3 3z", "#c8dcf5") + f("M2 6h11v7H2z", "#8fb8e8") + f("M13 7l3-3v6l-3 3z", "#567fb5"),
  tnode: dots([9, 9]), tline: p("M3 16L15 4", "#111", 1.3) + dots([3, 16], [15, 4]), tmember: p("M4 14L14 4", "#a9c4e8", 3) + dots([3, 16], [15, 3]) + p("M11 11.500h6M14 12v5M11 16.500h6", "#444"),
  tsurf: f("M1 8l8-5 8 3-6 8z", "#7fa6cc") + f("M5 9l4-6 8 3-6 8z", "#5a86b4"), topen: p("M2.500 2.500h13v13h-13z", "#567fa8", 1, "#8fb4d8") + `<circle cx="9" cy="8.500" r="3.500" fill="#fff"/>`, tsolid: cubeIcon,
  lineset: p("M3 16L16 3", "#111", 1.4) + dots([3, 16], [9, 9], [16, 3]) + p("M15 11v6M12 14h6", "#111", 1.2), memberset: p("M3 16L16 3", "#8fb0dc", 3) + dots([3, 16], [9, 9], [16, 3]) + p("M15 11v6M12 14h6", "#111", 1.2),
  surfset: f("M1 8l8-5 8 3-6 8z", "#6a94c0") + p("M15 11v6M12 14h6", "#111", 1.2), solidset: f("M2 4l3-2h8v10l-3 3H2z", "#8fb8e8") + f("M10 5l3-3v10l-3 3z", "#567fb5") + p("M15 11v6M12 14h6", "#111", 1.2)
};
const fillIcon = (el, name) => { el.setAttribute("viewBox", "0 0 18 18"); el.innerHTML = ICONS[name]; };
document.querySelectorAll("svg[data-icon]").forEach(el => fillIcon(el, el.dataset.icon));
const icon = name => `<svg class="icon" viewBox="0 0 18 18">${ICONS[name]}</svg>`;

// ---- toolbars ----
document.querySelectorAll("[data-tools]").forEach(bar => {
  bar.innerHTML = bar.dataset.tools.split(" ").map(token => {
    const on = token[0] === "*" ? " on" : "", name = token.replace("*", "");
    if (name === "handle") return '<span class="handle"></span>';
    if (name === "s") return '<span class="sep"></span>';
    if (name === "end") return '<span class="end"></span>';
    if (name === "more") return '<button class="more" aria-label="More tools">»</button>';
    if (name === "v") return `<button class="drop${on}" aria-label="Options"><svg viewBox="0 0 8 4"><path d="M0 0h8L4 4z" fill="#222"/></svg></button>`;
    return `<button class="tool${on}" aria-label="${name}">${icon(name)}</button>`;
  }).join("");
});

// ---- navigator tree: level, twist (> closed, v open, - none), icon, text ----
const TREE = [
  [0, "", "rfem", "RFEM"], [1, ">", "file", "Stahlhalle_Verband_Joints2 (1).rf6*"], [1, "v", "file", "Stahlhalle_Verband_Joints2 (1)-SteelJoints-000002.rf6*", "current"],
  [2, "v", "folderopen", "Basic Objects"],
  [3, ">", "materials", "Materials"], [3, ">", "sections", "Sections"], [3, ">", "thick", "Thicknesses"], [3, ">", "tnode", "Nodes"], [3, ">", "tline", "Lines"], [3, ">", "tmember", "Members"], [3, ">", "tsurf", "Surfaces"], [3, ">", "topen", "Openings"],
  [3, "-", "tsolid", "Solids"], [3, "-", "lineset", "Line Sets"], [3, "-", "memberset", "Member Sets"], [3, "-", "surfset", "Surface Sets"], [3, "-", "solidset", "Solid Sets"],
  ...["Special Objects", "Types for Nodes", "Types for Lines", "Types for Members", "Types for Surfaces", "Types for Solids", "Types for Special Objects", "Imperfections", "Load Cases & Combinations", "Load Wizards", "Loads", "Results", "Guide Objects"].map(t => [2, ">", "folder", t]),
  [2, "-", "folder", "Printout Reports"]
];
document.getElementById("tree").innerHTML = TREE.map(([level, twist, ic, text, cls = ""]) => {
  const d = twist === ">" ? "M5 1l4 4-4 4" : twist === "v" ? "M3 3l4 4 4-4" : "";
  const t = twist === "" ? "" : `<span class="twist${twist === "v" ? " open" : ""}"><svg viewBox="0 0 14 10"><path d="${d}"/></svg></span>`;
  return `<li class="l${level} ${cls}">${t}${icon(ic)}<span>${text.replace("&", "&amp;")}</span></li>`;
}).join("");

// ---- finite element model ----
const lerp = (a, b, t) => [a[0] + (b[0] - a[0]) * t, a[1] + (b[1] - a[1]) * t];
const xy = q => q.map(v => v.toFixed(1)).join(" ");
const seg = (a, b) => `M${xy(a)}L${xy(b)}`;
const poly = (pts, fill, opacity = 1) => `<path d="M${pts.map(xy).join("L")}z" fill="${fill}" fill-opacity="${opacity}"/>`;
// Mesh of a quad given as top-left, top-right, bottom-right, bottom-left.
const mesh = ([a, b, c, d], nu, nv) => {
  let path = "";
  for (let i = 1; i < nu; i++) path += seg(lerp(a, b, i / nu), lerp(d, c, i / nu));
  for (let j = 1; j < nv; j++) path += seg(lerp(a, d, j / nv), lerp(b, c, j / nv));
  return `<path class="mesh" d="${path}"/>`;
};
const line = (cls, ...pts) => `<path class="${cls}" d="M${pts.map(xy).join("L")}"/>`;
const red = (x, y, r = 3) => `<rect x="${x - r}" y="${y - r}" width="${2 * r}" height="${2 * r}" rx="1" fill="#f00"/>`;
const weld = (a, b, ends = true) => line("weld", a, b) + line("weldcore", a, b) + (ends ? red(a[0], a[1] - 2) + red(a[0] + 2, a[1] + 2) + red(b[0], b[1] - 2) + red(b[0] - 1, b[1] + 2) : "");
const bolt = (x, y) => `<ellipse cx="${x - 10}" cy="${y}" rx="6" ry="6" fill="#a070d0" fill-opacity=".6"/><ellipse cx="${x + 10}" cy="${y}" rx="4" ry="6" fill="#9060c0" fill-opacity=".5"/>` +
  [-9, -3, 3, 9].map((o, i) => `<ellipse cx="${x + o}" cy="${y + (i % 2 ? 1 : -1)}" rx="4" ry="${i === 3 ? 8 : 6}" fill="#ff7f20"/>`).join("") +
  [-6, 0, 6].map(o => `<path d="M${x + o} ${y - 3}v6" stroke="#e02010"/><path d="M${x + o + 2} ${y - 8}v3" stroke="#f0f"/>`).join("");

let m = "";
const web = [[572, 276], [892, 336], [892, 577], [567, 449]];
m += poly(web, "#b9e6fd") + mesh(web, 20, 12);
m += `<path class="mesh" d="M872 345l-9 12 8 12 14 6M863 395l10-12 12 8M864 397l12 14 10-8M862 430l14-12 10 10M864 450l10 12 12-4M800 520l12-18 20 8M850 500l16 14 16-10M660 450l-11 10 14 16M880 480l-12-18"/>`;
// top and bottom flanges
m += poly([[556, 281], [588, 266.5], [948, 332], [892, 343]], "#afd0e2") + poly([[556, 281], [572, 274], [892, 336], [892, 343]], "#93c9e9");
m += mesh([[572, 274], [588, 266.5], [930, 329], [892, 336]], 1, 2) + line("thinline", [588, 266.5], [915, 326]) + line("thinline", [572, 274], [892, 333]) + line("thinline", [576, 276], [892, 335]);
m += poly([[567, 449], [583, 442], [892, 563], [892, 577]], "#91c9ea") + poly([[551, 457], [567, 449], [892, 577], [892, 591]], "#abcde0");
m += line("thinline", [583, 442], [892, 563]) + line("black", [567, 449], [892, 576]) + line("thinline", [571, 453], [892, 579]) + line("black", [551, 457], [892, 591]) + line("black", [556, 281], [892, 343]);
[1, 2, 3, 4, 5, 6, 7, 8].forEach(i => { m += `<path d="M${567 + i * 34} ${449 + i * 13.3}h2v2h-2z" fill="#10107a"/>`; });
// end plate
const plate = [[556, 281], [572, 274], [567, 449], [551, 457]], plate2 = [[572, 274], [588, 266.5], [583, 442], [567, 449]];
m += poly(plate, "#ff78ff") + mesh(plate, 2, 12) + poly(plate2, "#c98cff") + mesh(plate2, 2, 12) + line("thinline", [556, 281], [588, 266.5], [583, 442], [551, 457]) + line("black", [556, 281], [551, 457]) + line("thinline", [572, 274], [567, 449]);
m += poly([[560, 280], [572, 274], [588, 267], [588, 287], [570, 284]], "#a060d0", .5) + line("pink", [557, 428], [566, 424], [566, 441], [556, 445], [557, 428]) + line("pink", [556, 445], [553, 452]);
m += [[556, 281], [572, 273], [572, 276], [588, 266], [551, 457], [567, 447], [567, 450], [569, 362]].map(q => red(q[0], q[1], 1.8)).join("");
// column faces, left to right
const faces = [
  [888, 917.5, 343, 332, 763, 751, "#c5fcfd", 4, 42], [917.5, 944.5, 332, 321, 751, 739, "#9fe7fd", 3, 42], [944.5, 978, 321, 357, 739, 776, "#b9e5fd", 3, 28],
  [978, 1005, 357, 345, 776, 764, "#9be4fb", 4, 44], [1005, 1034, 345, 332.5, 764, 751.5, "#c2f8fb", 4, 44]];
faces.forEach(([x1, x2, t1, t2, b1, b2, c, nu, nv]) => {
  const back = x1 === 944.5, q = [[x1, t1], [x2, t2], [x2, b2], [x1, b1]];
  m += poly(q, c) + mesh(back ? [[944, 340], [978, 345], [978, 760], [944, 755]] : q, nu, nv);
});
// base plate
m += poly([[888, 763], [945, 739], [1034, 751.5], [978, 776]], "#c58fe8") + poly([[945, 739], [1034, 751.5], [1005, 764], [935, 745]], "#b89af4") + poly([[888, 763], [917, 751], [930, 757], [915, 765]], "#e884dc") + poly([[916, 757], [946, 745], [1006, 754], [1006, 765], [978, 776], [915, 767]], "#4b9a5c") + mesh([[917.5, 751], [1005, 764], [978, 776], [888, 763]], 9, 4);
// dense triangulated areas around the stiffeners
[[982, 365], [982, 440], [982, 560], [982, 605], [1008, 420], [1008, 560], [1008, 600], [950, 365], [950, 570], [950, 605], [890, 425], [890, 600]].forEach(([x, y]) => {
  m += `<path class="mesh" d="M${x} ${y}l7 9 8-10 8 11M${x} ${y + 16}l8-7 7 10 9-8M${x + 7} ${y + 9}v18M${x + 15} ${y}l-1 24M${x} ${y + 24}l9 4 10-5"/>`;
});
m += line("thinline", [888, 343], [888, 763]) + line("thinline", [917.5, 340], [917.5, 751]) + line("thinline", [919, 340], [919, 751]) + line("thinline", [944.5, 330], [944.5, 739]) + line("thinline", [977.5, 357], [977.5, 776]) + line("thinline", [978.5, 357], [978.5, 776]) + line("thinline", [1005, 345], [1005, 764]) + line("thinline", [1034, 332], [1034, 751]);
m += line("black", [888, 763], [978, 776]) + line("thinline", [888, 763], [945, 739], [1034, 751], [978, 776]) + line("thinline", [917, 751], [1005, 764]);
// stiffener plates
[[0, .85], [78, .6], [253, .6]].forEach(([dy, o]) => {
  m += poly([[890, 344 + dy], [946, 320 + dy], [1034, 333 + dy], [978, 357 + dy]], "#8fbcd6", o) + line("black", [890, 344 + dy], [978, 357 + dy]) + line("thinline", [946, 320 + dy], [1034, 333 + dy]);
});
m += mesh([[890, 344], [946, 320], [1034, 333], [978, 357]], 6, 1);
// weld chains
for (let y = 346; y < 590; y += 9) m += `<path d="M907 ${y}h5M908 ${y + 3}h6" stroke="#4a3058" stroke-width="2" opacity=".65"/><ellipse cx="909" cy="${y + 2}" rx="5" ry="2.500" fill="none" stroke="#9a7890" opacity=".6"/>`;
m += `<path d="M899 350V585M934 365V570" stroke="#3f78b0" stroke-dasharray="10 4" fill="none"/>`;
for (let y = 375; y < 745; y += 42) m += `<path d="M917 ${y}h2v2h-2z" fill="#00007a"/>`;
m += weld([892, 342], [946, 319]) + weld([980, 355], [1032, 333]) + weld([928, 331], [994, 343]) + red(912, 334) + red(925, 326) + red(928, 332) + red(997, 346) + red(1009, 338);
[0, 175].forEach(d => { m += weld([893, 421 + d], [909, 414 + d]) + weld([935, 411 + d], [982, 419 + d], false) + red(927, 407 + d) + red(932, 413 + d) + weld([980, 434 + d], [995, 428 + d]) + weld([1014, 419 + d], [1030, 412 + d]) + line("pink", [938, 403 + d], [948, 399 + d]) + line("pink", [982, 418 + d], [992, 421 + d]); });
m += bolt(925, 356) + bolt(905, 364) + bolt(925, 384) + bolt(905, 393) + bolt(925, 558) + bolt(905, 567);
m += line("pink", [868, 520], [885, 524], [884, 542], [867, 538], [868, 520]) + line("pink", [884, 542], [891, 553]) + line("pink", [988, 370], [995, 373], [995, 387], [987, 384], [988, 370]) + line("pink", [873, 335], [887, 332], [891, 336]) + line("pink", [873, 576], [886, 570]) + line("pink", [976, 361], [976, 371], [982, 373]);
m += [[888, 763], [917, 750], [978, 776], [1034, 751], [1005, 763], [962, 757]].map(q => red(q[0], q[1], 1.8)).join("");
document.getElementById("model").innerHTML = m;
```
